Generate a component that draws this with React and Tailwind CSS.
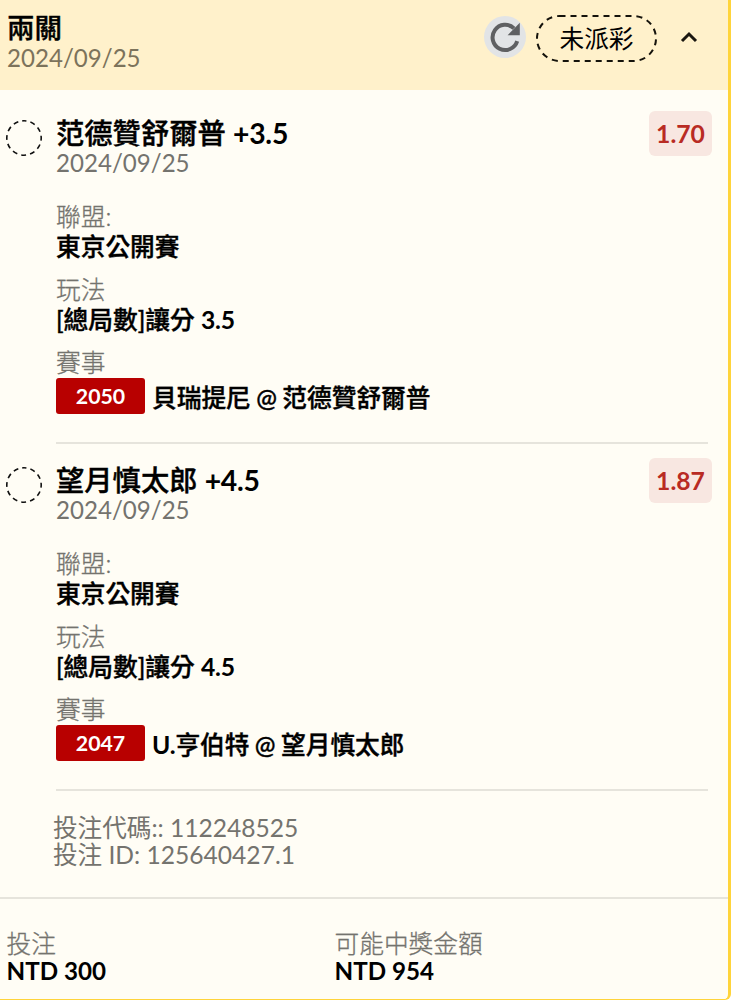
import clsx from 'clsx'

const LEGS = [
  {
    pick: '范德贊舒爾普 +3.5',
    date: '2024/09/25',
    odds: '1.70',
    league: '東京公開賽',
    market: '[總局數]讓分 3.5',
    code: '2050',
    match: '貝瑞提尼 @ 范德贊舒爾普',
  },
  {
    pick: '望月慎太郎 +4.5',
    date: '2024/09/25',
    odds: '1.87',
    league: '東京公開賽',
    market: '[總局數]讓分 4.5',
    code: '2047',
    match: 'U.亨伯特 @ 望月慎太郎',
  },
]

function Strong({ text }) {
  return (
    <span className="font-medium text-black [-webkit-text-stroke:0.4px_black]">
      {text.split(/([A-Za-z0-9+.]+)/).map((part, i) => (
        i % 2 ? <span key={i} className="font-bold tracking-[-0.2px] [-webkit-text-stroke:0]">{part}</span> : part
      ))}
    </span>
  )
}

function Label({ children }) {
  return <div className="text-[#74736e] font-light [-webkit-text-stroke:0.3px_#74736e]">{children}</div>
}

function RefreshIcon() {
  return (
    <svg viewBox="0 0 42 42" className="w-[42px] h-[42px]">
      <circle cx="21" cy="21" r="21" fill="#e2e4e6" />
      <path d="M33.2 25.2A12.6 12.6 0 1 1 30 12.4" fill="none" stroke="#5f6062" strokeWidth="4" />
      <path d="M35.8 6.8V19.2H23.6Z" fill="#5f6062" />
    </svg>
  )
}

function StatusPill({ children }) {
  return (
    <div className="relative w-[121px] h-[47px] flex items-center justify-center text-[24.7px] leading-none text-black">
      <svg viewBox="0 0 121 47" className="absolute inset-0 w-full h-full">
        <rect x="1" y="1" width="119" height="45" rx="22.5" fill="none" stroke="#15130c" strokeWidth="2" strokeDasharray="6 5" />
      </svg>
      <span className="pt-[2px]">{children}</span>
    </div>
  )
}

function PendingCircle() {
  return (
    <svg viewBox="0 0 36 36" className="w-9 h-9 mt-[9px] shrink-0">
      <circle cx="18" cy="18" r="17.2" fill="none" stroke="#111" strokeWidth="1.6" strokeDasharray="5 4.006" strokeDashoffset="2.5" transform="rotate(-90 18 18)" />
    </svg>
  )
}

function Field({ label, value, className }) {
  return (
    <div className={clsx('text-[24.7px] leading-[30px]', className)}>
      <Label>{label}</Label>
      <div><Strong text={value} /></div>
    </div>
  )
}

function Leg({ leg }) {
  return (
    <section className="flex gap-[14px] pl-[6px] pr-[20px]">
      <PendingCircle />
      <div className="flex-1 h-[333px] border-b-2 border-[#e6e4dc]">
        <div className="flex justify-between -mr-1">
          <div className="pt-[7px]">
            <div className="text-[28.3px] leading-[30px]"><Strong text={leg.pick} /></div>
            <div className="text-[24.1px] leading-[30px] text-[#74736e]">{leg.date}</div>
          </div>
          <div className="w-[63px] h-[45px] rounded-[6px] bg-[#f8e7e1] text-[#b92b23] text-[24.7px] font-bold flex items-center justify-center">
            {leg.odds}
          </div>
        </div>
        <Field label="聯盟:" value={leg.league} className="mt-6" />
        <Field label="玩法" value={leg.market} className="mt-[13px]" />
        <div className="mt-[13px] text-[24.7px] leading-[30px]">
          <Label>賽事</Label>
        </div>
        <div className="flex items-center gap-[7px] h-9 text-[24.7px]">
          <span className="w-[89px] h-9 pt-px rounded-[3px] bg-[#b80000] text-white text-[21.3px] font-bold flex items-center justify-center">
            {leg.code}
          </span>
          <span className="leading-9 pt-[3px] [word-spacing:-0.8px]"><Strong text={leg.match} /></span>
        </div>
      </div>
    </section>
  )
}

export default function App() {
  return (
    <div className="h-[1000px] overflow-hidden bg-white font-['Lato','Noto_Sans_CJK_TC',sans-serif] whitespace-nowrap">
      <main className="w-[731px] h-[1000px] bg-[#fffdf5] border-r-[3px] border-b border-[#ffd43b] rounded-br-[6px]">
        <header className="h-[90px] bg-[#fff1cb] flex justify-between pl-[7px] pr-[30px]">
          <div className="pt-[13px]">
            <h1 className="text-[27.5px] leading-[30px]"><Strong text="兩關" /></h1>
            <div className="text-[24.1px] leading-[30px] text-[#7c735b]">2024/09/25</div>
          </div>
          <div className="flex items-center h-[76px]">
            <div className="pb-[3px]">
              <RefreshIcon />
            </div>
            <div className="ml-[10px]">
              <StatusPill>未派彩</StatusPill>
            </div>
            <svg viewBox="0 0 18 12" className="w-[18px] h-3 ml-[23px] mb-[2px]">
              <path d="M2 10L9 3L16 10" fill="none" stroke="#1a1710" strokeWidth="3" />
            </svg>
          </div>
        </header>

        <div className="flex flex-col gap-[14px] pt-[21px]">
          {LEGS.map(leg => (
            <Leg key={leg.code} leg={leg} />
          ))}
        </div>

        <div className="h-[108px] pt-[23px] pl-[53px] border-b-2 border-[#e6e4dc] text-[24.6px] leading-[27px] text-[#74736e]">
          <div>投注代碼:: 112248525</div>
          <div>投注 ID: 125640427.1</div>
        </div>

        <footer className="flex pt-[31px] pl-[6.5px] text-[24.7px] leading-[27px]">
          <div className="w-[328px]">
            <Label>投注</Label>
            <div className="font-bold text-black text-[24.2px]">NTD 300</div>
          </div>
          <div>
            <Label>可能中獎金額</Label>
            <div className="font-bold text-black text-[24.2px]">NTD 954</div>
          </div>
        </footer>
      </main>
    </div>
  )
}
